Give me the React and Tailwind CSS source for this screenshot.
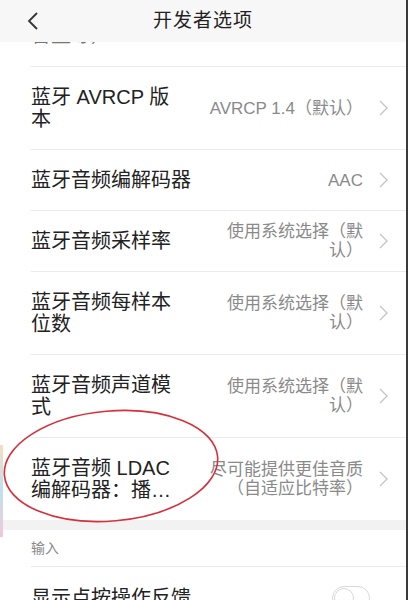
const ROWS = [
  { title: '蓝牙 AVRCP 版本', value: 'AVRCP 1.4（默认）' },
  { title: '蓝牙音频编解码器', value: 'AAC' },
  { title: '蓝牙音频采样率', value: '使用系统选择（默认）' },
  { title: '蓝牙音频每样本位数', value: '使用系统选择（默认）' },
  { title: '蓝牙音频声道模式', value: '使用系统选择（默认）' },
  { title: '蓝牙音频 LDAC 编解码器：播放质量', value: '尽可能提供更佳音质（自适应比特率）' },
]

function Chevron() {
  return (
    <svg width="9" height="16" viewBox="0 0 9 16" className="shrink-0 ml-[16px]">
      <path d="M1 1 L8 8 L1 15" fill="none" stroke="#c6c6c6" strokeWidth="1.4" />
    </svg>
  )
}

function Row({ title, value, last }) {
  return (
    <div className={`ml-[31px] flex items-center pr-[18px] ${last ? '' : 'border-b border-[#ebebeb]'}`}>
      <div className="flex-1 min-w-0 py-[19px]">
        <div className="text-[20px] leading-[22px] text-[#222] line-clamp-2">{title}</div>
      </div>
      <div className="ml-[26px] max-w-[158px] text-right text-[17px] leading-[19px] text-[#8a8a8a]">{value}</div>
      <Chevron />
    </div>
  )
}

export default function App() {
  return (
    <div
      className="relative w-[408px] h-[600px] overflow-hidden bg-white border-r-[2px] border-[#3a3a3a]"
      style={{ fontFamily: '"Liberation Sans", "Noto Sans CJK SC", sans-serif' }}
    >
      {/* Header */}
      <div className="h-[42px] bg-[#f7f7f7] flex items-center relative">
        <svg width="12" height="18" viewBox="0 0 12 18" className="absolute left-[27px] top-[12px]">
          <path d="M10 1 L2 9 L10 17" fill="none" stroke="#333" strokeWidth="1.8" />
        </svg>
        <div className="flex-1 text-center text-[19px] text-[#222] tracking-[1px]">开发者选项</div>
      </div>

      {/* Previous row, scrolled under header */}
      <div className="h-[25px] overflow-hidden flex items-end border-b border-[#ebebeb] ml-[31px]">
        <div className="shrink-0 text-[20px] leading-[21px] mb-[20px] text-[#777]">音量等）⌄</div>
      </div>

      {ROWS.map((r, i) => (
        <Row key={r.title} title={r.title} value={r.value} last={i === ROWS.length - 1} />
      ))}

      {/* Section gap */}
      <div className="h-[10px] bg-[#f2f2f2]" />

      <div className="ml-[31px] h-[37px] flex items-center border-b border-[#ebebeb] text-[14px] text-[#888]">输入</div>

      <div className="ml-[31px] flex items-center py-[19px] pr-[36px]">
        <div className="flex-1 text-[20px] leading-[22px] text-[#222]">显示点按操作反馈</div>
        <div className="w-[38px] h-[24px] rounded-full border border-[#d8d8d8] relative">
          <div className="absolute left-[1px] top-[1px] w-[20px] h-[20px] rounded-full border border-[#d8d8d8] bg-white" />
        </div>
      </div>

      {/* Left edge colour strip */}
      <div className="absolute left-0 top-[445px] w-[3px] h-[92px] bg-gradient-to-b from-[#f8dcc0] via-[#bfe0f0] to-[#f1c6d6]" />

      {/* Red annotation ellipse */}
      <svg className="absolute left-0 top-0 pointer-events-none" width="408" height="600">
        <ellipse cx="111" cy="466" rx="107" ry="55" transform="rotate(-5 111 466)" fill="none" stroke="#d8303b" strokeWidth="1.6" />
      </svg>
    </div>
  )
}
